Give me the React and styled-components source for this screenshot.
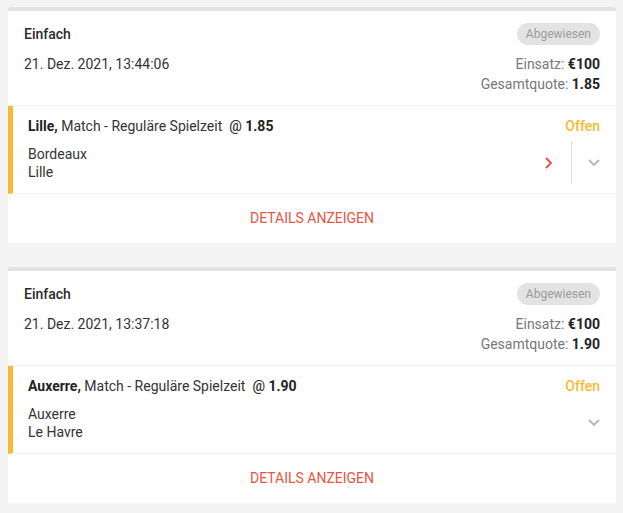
import React from 'react'
import styled, { createGlobalStyle } from 'styled-components'

const bets = [
  {
    type: 'Einfach',
    date: '21. Dez. 2021, 13:44:06',
    stake: '€100',
    odds: '1.85',
    team: 'Lille',
    market: 'Match - Reguläre Spielzeit',
    home: 'Bordeaux',
    away: 'Lille',
    link: true,
  },
  {
    type: 'Einfach',
    date: '21. Dez. 2021, 13:37:18',
    stake: '€100',
    odds: '1.90',
    team: 'Auxerre',
    market: 'Match - Reguläre Spielzeit',
    home: 'Auxerre',
    away: 'Le Havre',
    link: false,
  },
]

function Chevron({ dir, color }) {
  const d = dir === 'down' ? 'M2 4l5 5 5-5' : 'M4 2l5 5-5 5'
  return (
    <svg width="14" height="14" viewBox="0 0 14 14">
      <path d={d} fill="none" stroke={color} strokeWidth="1.8" />
    </svg>
  )
}

function BetCard({ bet }) {
  return (
    <Card>
      <Header>
        <Col>
          <Type>{bet.type}</Type>
          <DateText>{bet.date}</DateText>
        </Col>
        <Col $right>
          <Pill>Abgewiesen</Pill>
          <Info>Einsatz: <b>{bet.stake}</b></Info>
          <Info>Gesamtquote: <b>{bet.odds}</b></Info>
        </Col>
      </Header>
      <Selection>
        <SelTop>
          <Title>
            <b>{bet.team},</b> {bet.market}&nbsp; <At>@</At> <b>{bet.odds}</b>
          </Title>
          <Status>Offen</Status>
        </SelTop>
        <SelBottom>
          <Teams>
            <span>{bet.home}</span>
            <span>{bet.away}</span>
          </Teams>
          <Controls>
            {bet.link && (
              <>
                <IconBox><Chevron dir="right" color="#e0513d" /></IconBox>
                <Divider />
              </>
            )}
            <IconBox $wide><Chevron dir="down" color="#b5b5b5" /></IconBox>
          </Controls>
        </SelBottom>
      </Selection>
      <Details>DETAILS ANZEIGEN</Details>
    </Card>
  )
}

export default function App() {
  return (
    <>
      <Global />
      <List>
        {bets.map((b, i) => <BetCard key={i} bet={b} />)}
      </List>
    </>
  )
}

const Global = createGlobalStyle`
  html, body {
    margin: 0;
    background: #f4f4f4;
    font-family: Roboto, 'Liberation Sans', sans-serif;
    color: #222;
  }
`

const List = styled.div`
  display: flex;
  flex-direction: column;
  gap: 24px;
  padding: 7px 7px 0 8px;
`

const Card = styled.div`
  background: #fff;
  border-top: 4px solid #e2e2e2;
  border-radius: 3px 3px 0 0;
`

const Header = styled.div`
  display: flex;
  justify-content: space-between;
  padding: 12px 16px 11px;
  border-bottom: 1px solid #f0f0f0;
`

const Col = styled.div`
  display: flex;
  flex-direction: column;
  align-items: ${p => (p.$right ? 'flex-end' : 'flex-start')};
`

const Type = styled.div`
  font-size: 14px;
  font-weight: 500;
  line-height: 22px;
  margin-bottom: 9px;
  color: #2a2a2a;
`

const DateText = styled.div`
  font-size: 14px;
  line-height: 20px;
  color: #333;
`

const Pill = styled.div`
  background: #e3e3e3;
  color: #9b9b9b;
  font-size: 12px;
  line-height: 22px;
  padding: 0 9px;
  border-radius: 11px;
  margin-bottom: 9px;
`

const Info = styled.div`
  font-size: 14px;
  line-height: 20px;
  color: #777;
  b {
    color: #222;
    font-weight: 700;
  }
`

const Selection = styled.div`
  border-left: 5px solid #f6b935;
  padding: 10px 16px 12px 15px;
  border-bottom: 1px solid #f0f0f0;
`

const SelTop = styled.div`
  display: flex;
  justify-content: space-between;
  align-items: center;
  margin-bottom: 9px;
`

const Title = styled.div`
  font-size: 14px;
  line-height: 20px;
  color: #333;
  b {
    font-weight: 700;
    color: #222;
  }
`

const At = styled.span`
  font-weight: 500;
`

const Status = styled.div`
  font-size: 14px;
  font-weight: 500;
  line-height: 20px;
  color: #f6b935;
`

const SelBottom = styled.div`
  display: flex;
  justify-content: space-between;
  align-items: center;
`

const Teams = styled.div`
  display: flex;
  flex-direction: column;
  font-size: 14px;
  line-height: 18px;
  color: #333;
`

const Controls = styled.div`
  display: flex;
  align-items: center;
  height: 36px;
`

const IconBox = styled.div`
  display: flex;
  align-items: center;
  justify-content: center;
  width: ${p => (p.$wide ? '28px' : '16px')};
  margin-right: ${p => (p.$wide ? '-8px' : '0')};
`

const Divider = styled.div`
  width: 1px;
  height: 42px;
  background: #dcdcdc;
  margin: 0 8px 0 14px;
`

const Details = styled.div`
  text-align: center;
  font-size: 14px;
  line-height: 20px;
  padding: 14px 0 15px;
  color: #e8553f;
`
